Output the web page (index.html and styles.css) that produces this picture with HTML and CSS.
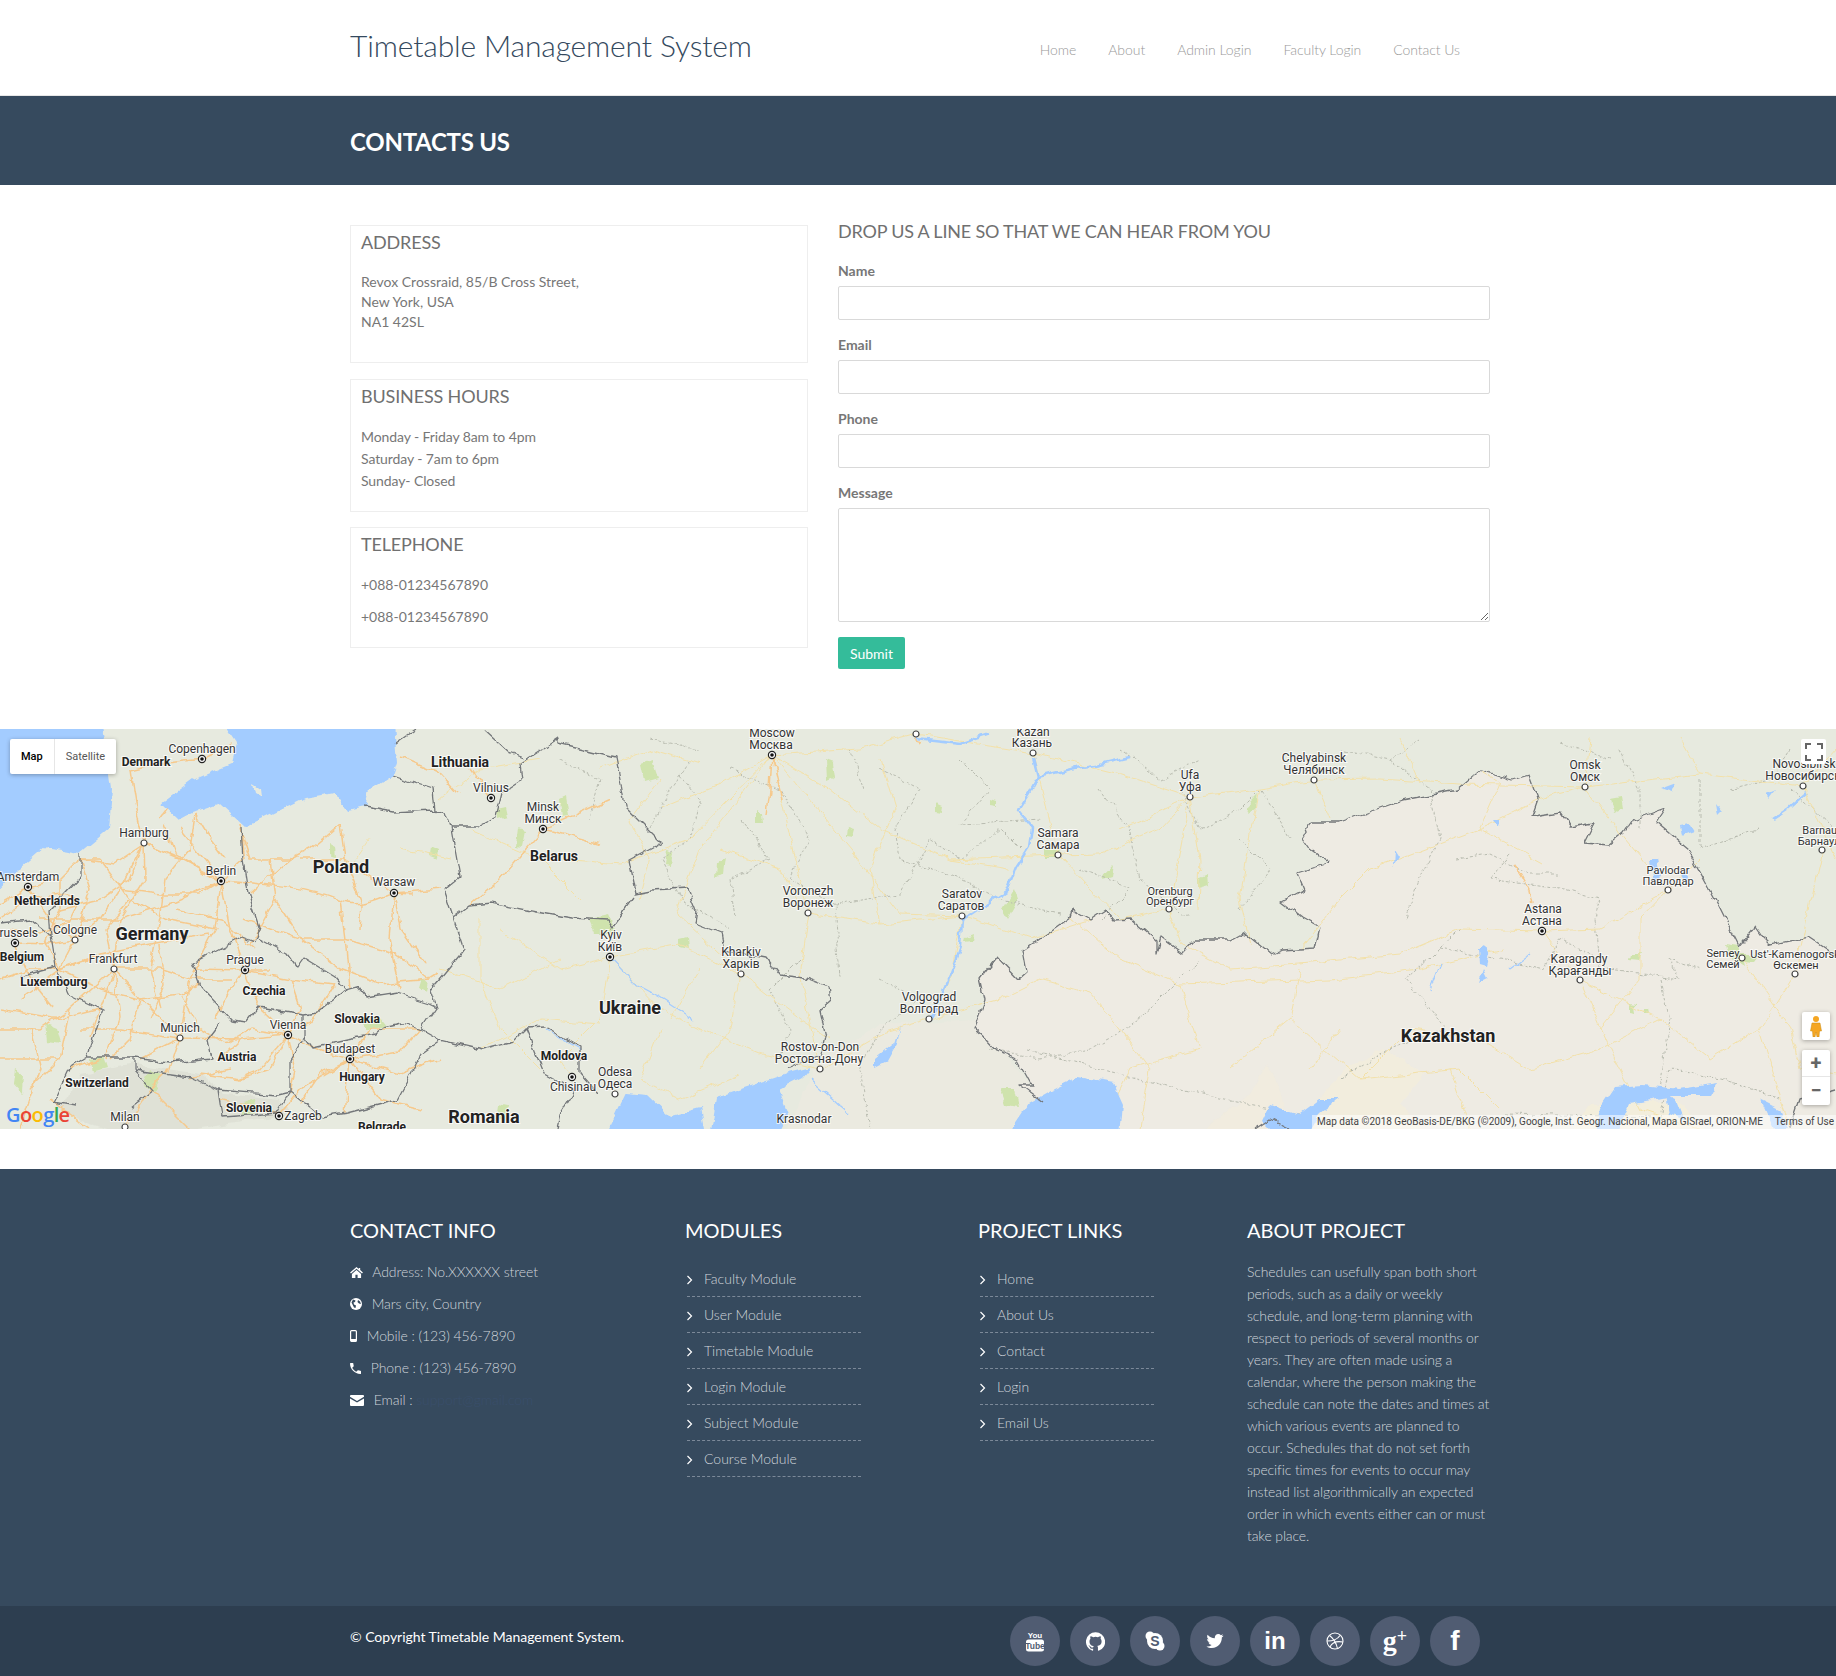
FILE: index.html
```html
<!DOCTYPE html>
<html lang="en">
<head>
    <meta charset="UTF-8">
    <title>Timetable Management System</title>
    <link rel="stylesheet" href="styles.css">
</head>
<body>
    <header class="site-header">
        <div class="container header-row">
            <a class="brand">Timetable Management System</a>
            <nav class="main-nav">
                <a>Home</a>
                <a>About</a>
                <a>Admin Login</a>
                <a>Faculty Login</a>
                <a>Contact Us</a>
            </nav>
        </div>
    </header>

    <section class="banner">
        <div class="container">
            <h1>CONTACTS US</h1>
        </div>
    </section>

    <section class="container contact-row">
        <div class="info-col">
            <div class="info-box">
                <h3>ADDRESS</h3>
                <p class="address">Revox Crossraid, 85/B Cross Street,<br>New York, USA<br>NA1 42SL</p>
            </div>
            <div class="info-box">
                <h3>BUSINESS HOURS</h3>
                <p class="hours">Monday - Friday 8am to 4pm<br>Saturday - 7am to 6pm<br>Sunday- Closed</p>
            </div>
            <div class="info-box">
                <h3>TELEPHONE</h3>
                <p class="tel">+088-01234567890</p>
                <p>+088-01234567890</p>
            </div>
        </div>
        <form class="contact-form">
            <h3>DROP US A LINE SO THAT WE CAN HEAR FROM YOU</h3>
            <label for="name">Name</label>
            <input type="text" id="name">
            <label for="email">Email</label>
            <input type="text" id="email">
            <label for="phone">Phone</label>
            <input type="text" id="phone">
            <label for="message">Message</label>
            <textarea id="message"></textarea>
            <button type="button">Submit</button>
        </form>
    </section>

    <section class="map">
        <svg class="map-art" viewBox="0 0 1836 400" width="1836" height="400">
            <defs>
                <filter id="rough" filterUnits="userSpaceOnUse" x="0" y="0" width="1836" height="400" color-interpolation-filters="sRGB">
                    <feTurbulence type="fractalNoise" baseFrequency="0.07" numOctaves="3" seed="4"/>
                    <feDisplacementMap in="SourceGraphic" scale="8" xChannelSelector="R" yChannelSelector="G"/>
                </filter>
                <g id="capital"><circle r="3.6" fill="#fff" stroke="#222" stroke-width="1.2"/><circle r="1.8" fill="#111"/></g>
                <circle id="town" r="3" fill="#fff" stroke="#444" stroke-width="1.2"/>
            </defs>

            <g filter="url(#rough)">
                <!-- land -->
                <rect x="-20" y="-20" width="1876" height="440" fill="#e7eadf"/>
                <path d="M780 420L815 335 880 295 980 290 1043 373 998 420Z" fill="#ebeae0"/>
                <path class="kz" d="M998 420L1043 373 1020 356 1032 356 1018 331 996 321 987 311 974 299 985 271 980 249 996 228 1018 251 1027 243 1023 221 1038 211 1070 188 1072 181 1090 191 1105 181 1114 191 1130 190 1157 213 1157 224 1161 208 1183 224 1195 211 1230 211 1244 203 1271 226 1282 221 1315 219 1320 198 1302 188 1282 173 1304 161 1297 144 1329 134 1311 121 1302 108 1311 94 1339 94 1403 71 1457 61 1481 41 1512 51 1529 46 1538 71 1532 88 1560 84 1570 98 1594 94 1584 114 1609 116 1625 103 1633 91 1666 79 1656 94 1688 121 1717 174 1739 218 1755 198 1762 208 1770 216 1809 208 1833 224 1860 244 1860 420Z"/>
                <!-- sand and alps -->
                <path d="M1300 420L1315 375 1345 340 1385 320 1425 345 1400 375 1440 420Z" fill="#f5efd8" opacity=".6"/>
                <path d="M1560 420L1590 375 1680 372 1720 420Z" fill="#f5efd8" opacity=".7"/>
                <path d="M1180 420L1250 365 1268 335 1300 420Z" fill="#f4eedb" opacity=".5"/>
                <path d="M134 335L200 345L225 365L280 370L290 385L230 395L130 410L90 395L60 380L80 345Z" fill="#d5d8cd" opacity=".45"/>

                <!-- parks -->
                <g fill="#cfe3ad">
                    <path d="M330 115l5 3 1 10-6-2zM430 118l8 4-1 8-8-3zM497 80l9-2 2 9-10 3zM518 100l7 2-3 15-6-1zM560 70l6-3 3 20-7 1zM590 190l18-4 8 18-20 0zM640 35l12-4 6 18-14 4zM665 120l8 4-2 12-8-1zM680 210l8-2 1 12-9-2zM420 250l8 3-2 10-9-3zM360 290l20-3 8 10-22 4zM15 340l8 6-1 18-9-10zM45 295l12 5 4 14-14-2zM90 330l12-3 4 12-14 4zM150 340l12 8-8 14-10-6zM240 375l14-4 2 12-14 4zM498 375l10 2-2 14-10-2z"/>
                    <path d="M825 30l8 3 2 15-9 4zM756 80l7 4 1 10-8 0zM716 135l9-6-2 16-8 4zM848 98l7 2-2 8-6-1zM935 75l7 3-1 6-6-1zM990 70l6 2 0 6-6-1zM1045 120l16 0-3 8-13 0zM1002 180l12-20 4 12-10 18zM1105 145l9-10-2 14-10 3zM1250 72l8-8-2 14-8 5zM1198 150l10-4 1 10-11 3zM1000 360l14 0 4 18-12-2zM965 208l8-3-1 7-8 1zM1610 70l12-2 2 12-10 4zM1630 225l12 0-3 6-10-1zM1630 274l5 1 1 9-6-1zM1644 280l4 0 1 5-5 0zM1725 215l14 2 5 20-16-10zM1740 225l20 0-6 8-12-1z"/>
                </g>

                <!-- regional borders -->
                <g class="region">
                    <path d="M680 45L700 70L690 110L660 130L680 170M680 170L730 200M730 40L780 60L810 110L790 150L835 175L840 250M835 175L900 165L930 110L960 130L1000 100L1020 120"/>
                    <path d="M880 40L920 60L895 100L900 130L960 150L1000 170L1060 185M1100 60L1130 100L1140 150L1190 190M1180 60L1200 100L1240 80L1260 60L1290 110"/>
                    <path d="M880 250L920 270L880 300L860 340L870 400M990 320L1040 330L1090 320L1120 305L1150 280L1200 230"/>
                    <path d="M1025 320L1100 340L1200 365L1300 385M1510 125L1490 150L1560 160L1600 170L1595 190L1600 250M1460 200L1430 230L1405 250L1445 300L1390 320L1340 350"/>
                    <path d="M1455 130L1490 125L1530 145L1560 145M1440 220L1500 230L1545 240L1560 210L1590 225L1610 240L1680 250L1670 230L1700 240M1660 250L1670 290L1660 360"/>
                    <path d="M1390 30L1430 60L1440 110L1420 150L1405 190M1620 20L1640 60L1640 100M1700 50L1700 120M1760 100L1700 120M1790 60L1836 100"/>
                    <path d="M1505 385L1660 388L1670 340L1720 350L1780 370"/>
                    <path d="M650 100L670 60L690 30M740 90L770 130L730 150L735 190M800 230L770 260L790 300L780 330M865 60L850 20M960 30L990 60L960 95L1040 90M1080 140L1130 160L1100 190M1240 110L1270 140L1240 180"/>
                    <path d="M560 30L600 50L590 90M650 10L700 20M1120 20L1160 50L1200 30M1340 20L1390 30L1420 10M1560 15L1610 30M1730 60L1770 50L1790 20"/>
                </g>

                <!-- thin roads -->
                <g class="road-thin">
                    <path d="M500 200L560 240L610 228L680 215L741 245M610 228L600 290L560 330L572 348M610 228L660 280L700 300L760 325L820 340"/>
                    <path d="M480 320L540 290L600 295M440 240L500 260L560 230M370 110L350 140M400 120L450 130M560 130L620 135L690 110L772 26"/>
                    <path d="M772 26L720 55L660 80M772 26L700 120L676 185L741 245M772 26L808 184L800 240L820 340M772 26L850 120L900 185L962 187"/>
                    <path d="M808 184L880 195L962 187L1030 210L1090 191M962 187L950 250L929 290M741 245L800 290L830 310M820 340L880 305L929 290L1000 270"/>
                    <path d="M772 26L860 20L916 5L1033 24L1120 45L1190 68L1260 60L1314 51L1380 50L1460 55L1585 58L1700 45L1803 57"/>
                    <path d="M1033 24L1058 126L1120 190L1169 180L1190 68M1058 126L1100 125L1160 100L1190 68M1058 126L950 130L880 100L830 60L772 26"/>
                    <path d="M1169 180L1180 215L1230 240L1300 235L1400 225L1460 200L1542 202L1600 200L1668 161L1700 130M1585 58L1625 110L1668 161"/>
                    <path d="M1542 202L1580 251L1610 320L1640 380M1580 251L1660 290L1710 330L1760 300L1795 245L1822 121M1668 161L1640 190L1640 250L1600 300"/>
                    <path d="M1070 188L1120 230L1180 255L1330 250L1420 240L1505 220M1300 240L1290 290L1360 350L1410 300L1480 310L1530 340L1600 320L1660 290"/>
                    <path d="M1180 255L1200 320L1130 340L1100 400M1290 290L1230 340M1742 229L1790 300L1800 340L1836 345M1360 350L1460 340L1500 380"/>
                    <path d="M1542 134L1480 100L1400 130L1370 140L1340 170L1300 220M1480 100L1500 55L1480 41M1585 58L1540 70L1480 100"/>
                    <path d="M1000 270L1040 250L1090 265L1120 300L1150 340L1140 400"/>
                    <path d="M660 50L630 90L650 130L640 170M470 100L540 130L580 170M440 70L480 40L540 30M600 40L650 20L700 35M480 190L480 250L500 300L540 340M660 300L640 350L680 370L740 345M700 240L670 290M740 245L730 300L700 340"/>
                    <path d="M720 120L780 140L808 184M880 30L895 80L870 140L880 195M950 130L1010 140M1120 100L1190 68M1190 68L1200 130L1198 180M1260 60L1250 110L1240 170L1250 215M1314 51L1330 90"/>
                    <path d="M1400 10L1420 55M1585 58L1590 10M1680 10L1700 45M1836 20L1803 57M1803 57L1836 130M1340 300L1310 340M1450 340L1470 400M1640 380L1700 400M1760 300L1790 400"/>
                </g>

                <!-- motorways and main roads, west -->
                <g class="road-main">
                    <path d="M221 152C270 155 310 158 340 172C362 180 380 168 394 164L412 165"/>
                    <path d="M144 114L180 130L221 152M144 114L135 75L130 42L160 35L202 30L232 15"/>
                    <path d="M144 114L120 160L100 190L75 211L60 240L20 270"/>
                    <path d="M144 114L145 150L120 190L114 240L120 290L105 330"/>
                    <path d="M221 152L215 200L190 250L180 309L140 330"/>
                    <path d="M114 240L150 280L180 309L240 310L288 306L320 322L350 330L400 322L420 300"/>
                    <path d="M221 152L230 200L245 241L270 241M245 241L260 280L288 306"/>
                    <path d="M245 190L270 200L300 210L340 240L380 255L430 250L438 245"/>
                    <path d="M340 95L345 130L362 175L360 200M394 164L400 200L425 235"/>
                    <path d="M350 330L345 385M350 330L380 370L420 380M350 330L300 360L280 385"/>
                    <path d="M400 28L440 45L458 65M491 69L470 40M610 70L543 100L500 150L470 175M543 100L600 115"/>
                    <path d="M28 158L60 150L80 130L100 130M28 158L50 190L75 211M15 214L50 215L75 211M15 214L30 250L54 280"/>
                    <path d="M75 211L90 160L80 130M0 175L28 158M60 180L100 170L130 150L144 114"/>
                    <path d="M180 100L200 125L221 152M195 85L190 120L165 150L160 190L150 240L160 280M240 95L245 130L221 152"/>
                    <path d="M114 240L70 280L60 330L30 360M114 240L160 240L190 250L230 250M114 240L105 200L130 170"/>
                    <path d="M60 240L100 225L150 215L210 205M80 300L120 300L180 309M125 398L150 360L170 340L180 309"/>
                    <path d="M160 90L175 70M175 180L220 190L255 220M0 300L40 300L70 280M0 330L30 330L60 330"/>
                    <path d="M220 330L240 310M237 350L260 340L288 306M190 350L230 340M220 370L280 385"/>
                    <path d="M60 150L60 180L45 215L60 240M80 130L115 135L145 115M100 130L130 170L165 190L215 200M40 190L80 190L120 190L170 175L221 152M120 160L160 165L200 165L221 152"/>
                    <path d="M165 95L175 125L205 145M195 85L210 110L225 130M240 100L250 130L290 130L310 120L340 95M60 240L100 260L140 270L180 265L200 255M115 240L100 280L90 310M140 270L130 310L110 330"/>
                    <path d="M180 265L200 300L225 315M160 215L165 255L150 290M195 240L245 241L290 250L335 255M245 241L225 270L215 290M290 250L300 280L288 306M335 255L320 280L304 300"/>
                    <path d="M225 315L250 300L288 306M288 306L270 340L240 350L200 345M288 306L295 340L290 365M350 330L320 345L300 375M350 330L370 300L420 300M350 330L400 345L440 330"/>
                    <path d="M270 130L275 170L300 210M300 210L345 210L395 225L430 250M340 172L345 210L350 260M394 164L390 210L400 260M300 130L345 130L394 164L440 160M290 130L250 165M275 170L250 215"/>
                    <path d="M0 190L30 170L60 165L80 170M10 200L40 205L70 190L80 170M30 240L60 240L90 230M0 250L30 240M0 280L60 290L100 280M30 300L40 340L20 400M70 340L100 330M50 370L90 400M150 360L190 400"/>
                    <path d="M772 26L770 60L767 85M772 26L782 70"/>
                    <path d="M916 5L916 12L922 14"/>
                    <path d="M1512 134L1520 145L1529 161L1532 174" stroke="#f2cf86"/>
                </g>

                <!-- water -->
                <g fill="#a3ccff">
                    <path d="M-20 -20L100 -20L108 30L112 60L109 100L80 124L45 118L22 138L-20 181Z"/>
                    <path d="M214 -20L393 -20L397 34L393 46L370 61L366 79L348 83L335 64L304 69L245 98L219 74L192 84L179 91L161 74L192 51L232 34L237 14Z"/>
                    <path d="M116 45l14 6-3 18-12-6zM150 68l12 4-4 14-10-6z" fill="#e7eadf"/>
                    <path d="M252 55l8 5 1 8-7-4z" fill="#e7eadf"/>
                    <path d="M598 420L625 364L647 366L670 388L700 380L708 420Z"/>
                    <path d="M708 420L717 368L753 356L788 344L811 338L802 349L779 361L788 384L770 420Z"/>
                    <path d="M998 420L1029 374L1052 361L1079 348L1114 354L1123 374L1119 420Z"/>
                    <path d="M1591 420L1600 380L1615 358L1642 356L1680 360L1717 354L1710 367L1672 367L1630 375L1610 420Z"/>
                    <path d="M1290 420L1262 392L1270 375L1300 385L1320 370L1340 370L1320 385L1300 420Z"/>
                    <path d="M875 330l20-16 6-18-4 18-10 18-12 6z"/>
                    <path d="M1665 365l12 6 8 20-16-6zM1760 370l20 10 8 20-14 0z"/>
                    <path d="M1478 220l6-4 5 8-3 12-7-2zM1680 95l10-2 6 10-14 5zM1495 90l6 0-2 6zM1660 60l16-6-4 10zM1650 130l8 0 3 15-7 10zM1765 65l10-4-6 8zM1715 75l6 8-4 4z"/>
                    <path d="M1683 142l6 8-3 6-5-6zM1395 120l5 8-6 10zM1483 240l4 8-8 4z"/>
                </g>
                <g class="river">
                    <path d="M1033 28L1038 48L1029 64L1018 81L1032 98L1029 118L1016 138L1007 161L989 173L962 191L960 218L949 248L936 278L929 290M1038 48L1070 40L1100 35L1130 28M916 10L960 15L990 5"/>
                    <path d="M1806 64L1790 78L1772 90"/>
                </g>
                <path class="river-thin" d="M610 228L634 254L660 268L695 291M1440 235L1430 260M545 300L580 320M1530 225L1510 240M810 350L850 385"/>

                <!-- country borders -->
                <g class="border">
                    <path d="M241 98L243 131L248 164L259 198L254 213M257 208L286 224L297 239L304 229L335 248L346 261L357 258L366 269L397 264L429 274L437 278L431 261L464 221L453 188L444 161L460 148L451 98L446 84L433 81L393 83L364 78"/>
                    <path d="M451 98L478 98L496 88L502 64L522 51L520 34L558 9L558 14L616 28L621 54L625 78L661 114L629 131L636 164L652 161L688 159L697 181L695 194L721 204L724 221L766 229L779 246L806 249L829 258L831 271L820 281L826 308L822 325L786 341"/>
                    <path d="M395 14L415 0M484 1L509 24L522 29M393 46L433 59L435 81"/>
                    <path d="M453 188L469 176L491 174L536 183L571 189L607 191L612 198L634 168"/>
                    <path d="M437 278L422 301L440 311L482 321L513 313L527 299L545 298L580 318L580 344L598 364M527 299L545 344L576 361L562 384L558 400"/>
                    <path d="M422 301L402 294L384 298L375 306L348 311L312 319L304 308L304 286L317 284L346 261M304 286L259 279L248 293L232 291L201 258L192 234L241 208L254 213"/>
                    <path d="M221 294L208 311L212 329L170 333L134 328L87 328L103 281L67 264L56 238L51 208L49 181L80 148L80 124M87 328L71 338L54 374L76 378M134 328L134 341L152 361L130 378"/>
                    <path d="M134 341L192 349L219 361L277 366L290 363L290 331L304 308M219 361L223 388L277 384L290 363L321 388L348 384L397 371L422 324L440 311M0 194L31 191L51 208M18 248L56 238"/>
                    <path d="M1043 373L1020 356 1032 356 1018 331 996 321 987 311 974 299 985 271 980 249 996 228 1018 251 1027 243 1023 221 1038 211 1070 188 1072 181 1090 191 1105 181 1114 191 1130 190 1157 213 1157 224 1161 208 1183 224 1195 211 1230 211 1244 203 1271 226 1282 221 1315 219 1320 198 1302 188 1282 173 1304 161 1297 144 1329 134 1311 121 1302 108 1311 94 1339 94 1403 71 1457 61 1481 41 1512 51 1529 46 1538 71 1532 88 1560 84 1570 98 1594 94 1584 114 1609 116 1625 103 1633 91 1666 79 1656 94 1688 121 1717 174 1739 218 1755 198 1762 208 1770 216 1809 208 1833 224 1860 244"/>
                    <path d="M1790 400L1800 370L1836 360M1255 400L1270 390L1290 400"/>
                </g>
            </g>

            <!-- pins -->
            <use href="#capital" x="202" y="30"/><use href="#capital" x="491" y="69"/><use href="#capital" x="543" y="100"/>
            <use href="#capital" x="221" y="152"/><use href="#capital" x="394" y="164"/><use href="#capital" x="28" y="158"/>
            <use href="#capital" x="15" y="214"/><use href="#capital" x="245" y="241"/><use href="#capital" x="610" y="228"/>
            <use href="#capital" x="288" y="306"/><use href="#capital" x="350" y="330"/><use href="#capital" x="572" y="348"/>
            <use href="#capital" x="279" y="387"/><use href="#capital" x="772" y="26"/><use href="#capital" x="1542" y="202"/>
            <use href="#town" x="144" y="114"/><use href="#town" x="75" y="211"/><use href="#town" x="114" y="240"/>
            <use href="#town" x="180" y="309"/><use href="#town" x="615" y="365"/><use href="#town" x="125" y="398"/>
            <use href="#town" x="916" y="5"/><use href="#town" x="1033" y="24"/><use href="#town" x="1314" y="51"/>
            <use href="#town" x="1190" y="68"/><use href="#town" x="1058" y="126"/><use href="#town" x="808" y="184"/>
            <use href="#town" x="962" y="187"/><use href="#town" x="1169" y="180"/><use href="#town" x="741" y="245"/>
            <use href="#town" x="929" y="290"/><use href="#town" x="820" y="340"/><use href="#town" x="1585" y="58"/>
            <use href="#town" x="1803" y="57"/><use href="#town" x="1822" y="121"/><use href="#town" x="1668" y="161"/>
            <use href="#town" x="1580" y="251"/><use href="#town" x="1742" y="229"/><use href="#town" x="1795" y="245"/>

            <!-- labels -->
            <g class="city">
                <text x="202" y="24">Copenhagen</text>
                <text x="491" y="63">Vilnius</text>
                <text x="543" y="82">Minsk</text><text x="543" y="94">Минск</text>
                <text x="144" y="108">Hamburg</text>
                <text x="221" y="146">Berlin</text>
                <text x="394" y="157">Warsaw</text>
                <text x="28" y="152">Amsterdam</text>
                <text x="15" y="208">Brussels</text>
                <text x="75" y="205">Cologne</text>
                <text x="113" y="234">Frankfurt</text>
                <text x="245" y="235">Prague</text>
                <text x="611" y="210">Kyiv</text><text x="610" y="222">Київ</text>
                <text x="288" y="300">Vienna</text>
                <text x="180" y="303">Munich</text>
                <text x="350" y="324">Budapest</text>
                <text x="615" y="347">Odesa</text><text x="615" y="359">Одеса</text>
                <text x="573" y="362">Chisinau</text>
                <text x="303" y="391">Zagreb</text>
                <text x="125" y="392">Milan</text>
                <text x="772" y="8">Moscow</text><text x="771" y="20">Москва</text>
                <text x="1033" y="7">Kazan</text><text x="1032" y="18">Казань</text>
                <text x="1314" y="33">Chelyabinsk</text><text x="1314" y="45">Челябинск</text>
                <text x="1190" y="50">Ufa</text><text x="1190" y="62">Уфа</text>
                <text x="1058" y="108">Samara</text><text x="1058" y="120">Самара</text>
                <text x="808" y="166">Voronezh</text><text x="808" y="178">Воронеж</text>
                <text x="962" y="169">Saratov</text><text x="961" y="181">Саратов</text>
                <text x="804" y="394">Krasnodar</text>
                <text x="1585" y="40">Omsk</text><text x="1585" y="52">Омск</text>
                <text x="1804" y="39">Novosibirsk</text><text x="1803" y="51">Новосибирск</text>
                <text x="741" y="227">Kharkiv</text><text x="741" y="239">Харків</text>
                <text x="929" y="272">Volgograd</text><text x="929" y="284">Волгоград</text>
                <text x="820" y="322">Rostov-on-Don</text><text x="819" y="334">Ростов-на-Дону</text>
                <text x="1543" y="184">Astana</text><text x="1542" y="196">Астана</text>
                <text x="1579" y="234">Karagandy</text><text x="1580" y="246">Қарағанды</text>
            </g>
            <g class="city small">
                <text x="1170" y="166">Orenburg</text><text x="1170" y="176">Оренбург</text>
                <text x="1821" y="105">Barnaul</text><text x="1819" y="116">Барнаул</text>
                <text x="1668" y="145">Pavlodar</text><text x="1668" y="156">Павлодар</text>
                <text x="1723" y="228">Semey</text><text x="1723" y="239">Семей</text>
                <text x="1795" y="229">Ust'-Kamenogorsk</text><text x="1796" y="240">Өскемен</text>
            </g>
            <g class="state">
                <text x="146" y="37">Denmark</text>
                <text x="47" y="176">Netherlands</text>
                <text x="22" y="232">Belgium</text>
                <text x="54" y="257">Luxembourg</text>
                <text x="264" y="266">Czechia</text>
                <text x="357" y="294">Slovakia</text>
                <text x="237" y="332">Austria</text>
                <text x="362" y="352">Hungary</text>
                <text x="564" y="331">Moldova</text>
                <text x="97" y="358">Switzerland</text>
                <text x="249" y="383">Slovenia</text>
                <text x="382" y="402">Belgrade</text>
            </g>
            <g class="state large">
                <text x="460" y="38">Lithuania</text>
                <text x="554" y="132">Belarus</text>
            </g>
            <g class="country">
                <text x="341" y="144">Poland</text>
                <text x="152" y="211">Germany</text>
                <text x="630" y="285">Ukraine</text>
                <text x="484" y="394">Romania</text>
                <text x="1448" y="313">Kazakhstan</text>
            </g>
        </svg>

        <div class="map-type">
            <span class="active">Map</span>
            <span>Satellite</span>
        </div>
        <div class="map-btn fullscreen">
            <svg viewBox="0 0 18 18" width="18" height="18"><path d="M1 6V1h5M12 1h5v5M17 12v5h-5M6 17H1v-5" fill="none" stroke="#666" stroke-width="2"/></svg>
        </div>
        <div class="map-btn pegman">
            <svg viewBox="0 0 14 22" width="14" height="22"><circle cx="7" cy="4" r="3" fill="#f5a623"/><path d="M3 8h8l1.500 8h-2l-.5 6H8l-1-5-1 5H4l-.5-6h-2z" fill="#f5a623" stroke="#c98a12" stroke-width=".5"/></svg>
        </div>
        <div class="map-zoom">
            <button type="button">+</button>
            <button type="button">&minus;</button>
        </div>
        <div class="google-logo"><span class="g-b">G</span><span class="g-r">o</span><span class="g-y">o</span><span class="g-b">g</span><span class="g-g">l</span><span class="g-r">e</span></div>
        <div class="map-credit">
            <span>Map data ©2018 GeoBasis-DE/BKG (©2009), Google, Inst. Geogr. Nacional, Mapa GISrael, ORION-ME</span>
            <span>Terms of Use</span>
        </div>
    </section>

    <footer class="site-footer">
        <div class="container footer-grid">
            <div>
                <h4>CONTACT INFO</h4>
                <ul class="contact-list">
                    <li>
                        <svg class="ic" viewBox="0 0 14 12" width="13" height="11"><path d="M7 0L0 6l1 1 6-5 6 5 1-1-3-2.600V1H9.500v1.300zM2 7.500V12h3.800V8.500h2.400V12H12V7.500L7 3.200z" fill="#fff"/></svg>
                        Address: No.XXXXXX street
                    </li>
                    <li>
                        <svg class="ic" viewBox="0 0 12 12" width="12" height="12"><circle cx="6" cy="6" r="6" fill="#fff"/><path d="M3 1.500L5.500 2.500 5 4 3.500 4.500 4 6.500 6 7.500 5.500 10 4 9.500 2.500 6.500 1.500 4.500zM8 2l2 1.500L11 6 9 5.500 7.500 4z" fill="#364a5e"/></svg>
                        Mars city, Country
                    </li>
                    <li>
                        <svg class="ic" viewBox="0 0 7 12" width="7" height="12"><rect x=".6" y=".6" width="5.800" height="10.800" rx="1" fill="none" stroke="#fff" stroke-width="1.200"/><rect x="1" y="9" width="5" height="2.500" fill="#fff"/></svg>
                        Mobile : (123) 456-7890
                    </li>
                    <li>
                        <svg class="ic" viewBox="3 3 18 18" width="11" height="11"><path d="M6.620 10.790c1.440 2.830 3.760 5.140 6.590 6.590l2.200-2.200c.27-.27.67-.36 1.020-.24 1.120.37 2.330.57 3.570.57.55 0 1 .45 1 1V20c0 .55-.45 1-1 1-9.390 0-17-7.610-17-17 0-.55.45-1 1-1h3.500c.55 0 1 .45 1 1 0 1.250.2 2.450.57 3.570.11.35.03.74-.25 1.020l-2.200 2.200z" fill="#fff"/></svg>
                        Phone : (123) 456-7890
                    </li>
                    <li>
                        <svg class="ic" viewBox="0 0 14 11" width="14" height="11"><path d="M0 1a1 1 0 0 1 1-1h12a1 1 0 0 1 1 1v.8L7 6 0 1.800zM0 3.400L7 7.600 14 3.400V10a1 1 0 0 1-1 1H1a1 1 0 0 1-1-1z" fill="#fff"/></svg>
                        Email : <a class="mail">support@gmail.com</a>
                    </li>
                </ul>
            </div>
            <div>
                <h4>MODULES</h4>
                <ul class="link-list">
                    <li><svg class="chev" viewBox="0 0 6 10" width="6" height="10"><path d="M.5 1l4 4-4 4" fill="none" stroke="#fff" stroke-width="1.200"/></svg>Faculty Module</li>
                    <li><svg class="chev" viewBox="0 0 6 10" width="6" height="10"><path d="M.5 1l4 4-4 4" fill="none" stroke="#fff" stroke-width="1.200"/></svg>User Module</li>
                    <li><svg class="chev" viewBox="0 0 6 10" width="6" height="10"><path d="M.5 1l4 4-4 4" fill="none" stroke="#fff" stroke-width="1.200"/></svg>Timetable Module</li>
                    <li><svg class="chev" viewBox="0 0 6 10" width="6" height="10"><path d="M.5 1l4 4-4 4" fill="none" stroke="#fff" stroke-width="1.200"/></svg>Login Module</li>
                    <li><svg class="chev" viewBox="0 0 6 10" width="6" height="10"><path d="M.5 1l4 4-4 4" fill="none" stroke="#fff" stroke-width="1.200"/></svg>Subject Module</li>
                    <li><svg class="chev" viewBox="0 0 6 10" width="6" height="10"><path d="M.5 1l4 4-4 4" fill="none" stroke="#fff" stroke-width="1.200"/></svg>Course Module</li>
                </ul>
            </div>
            <div>
                <h4>PROJECT LINKS</h4>
                <ul class="link-list">
                    <li><svg class="chev" viewBox="0 0 6 10" width="6" height="10"><path d="M.5 1l4 4-4 4" fill="none" stroke="#fff" stroke-width="1.200"/></svg>Home</li>
                    <li><svg class="chev" viewBox="0 0 6 10" width="6" height="10"><path d="M.5 1l4 4-4 4" fill="none" stroke="#fff" stroke-width="1.200"/></svg>About Us</li>
                    <li><svg class="chev" viewBox="0 0 6 10" width="6" height="10"><path d="M.5 1l4 4-4 4" fill="none" stroke="#fff" stroke-width="1.200"/></svg>Contact</li>
                    <li><svg class="chev" viewBox="0 0 6 10" width="6" height="10"><path d="M.5 1l4 4-4 4" fill="none" stroke="#fff" stroke-width="1.200"/></svg>Login</li>
                    <li><svg class="chev" viewBox="0 0 6 10" width="6" height="10"><path d="M.5 1l4 4-4 4" fill="none" stroke="#fff" stroke-width="1.200"/></svg>Email Us</li>
                </ul>
            </div>
            <div>
                <h4>ABOUT PROJECT</h4>
                <p class="about">Schedules can usefully span both short periods, such as a daily or weekly schedule, and long-term planning with respect to periods of several months or years. They are often made using a calendar, where the person making the schedule can note the dates and times at which various events are planned to occur. Schedules that do not set forth specific times for events to occur may instead list algorithmically an expected order in which events either can or must take place.</p>
            </div>
        </div>
    </footer>

    <div class="copy-bar">
        <div class="container copy-row">
            <p>© Copyright Timetable Management System.</p>
            <div class="social">
                <a>
                    <svg viewBox="0 0 18 22" width="18" height="22"><text x="9" y="8" class="yt-you">You</text><rect x="0" y="9.500" width="18" height="12" rx="2.500" fill="#fff"/><text x="9" y="19" class="yt-tube">Tube</text></svg>
                </a>
                <a>
                    <svg viewBox="0 0 24 24" width="19" height="19"><path d="M12 .3a12 12 0 0 0-3.800 23.400c.6.1.8-.3.8-.6v-2c-3.300.7-4-1.600-4-1.600-.5-1.400-1.300-1.800-1.300-1.800-1.100-.7.1-.7.1-.7 1.200.1 1.800 1.200 1.800 1.200 1 1.800 2.800 1.300 3.500 1 .1-.8.4-1.300.8-1.600-2.700-.3-5.500-1.300-5.500-6 0-1.200.5-2.300 1.300-3.100-.2-.4-.6-1.600 0-3.200 0 0 1-.3 3.400 1.200a11.500 11.500 0 0 1 6 0c2.300-1.500 3.300-1.200 3.300-1.200.6 1.600.2 2.800 0 3.200.9.8 1.300 1.900 1.300 3.200 0 4.600-2.800 5.600-5.500 5.900.5.4.9 1 .9 2.200v3.300c0 .3.1.7.8.6A12 12 0 0 0 12 .3" fill="#fff"/></svg>
                </a>
                <a>
                    <svg viewBox="0 0 20 20" width="20" height="20"><circle cx="10" cy="10" r="8" fill="#fff"/><circle cx="5" cy="5" r="4.500" fill="#fff"/><circle cx="15" cy="15" r="4.500" fill="#fff"/><text x="10" y="15" class="sk-s">S</text></svg>
                </a>
                <a>
                    <svg viewBox="1 3 22 19" width="18" height="16"><path d="M22.460 6c-.77.35-1.600.58-2.460.69.88-.53 1.560-1.370 1.880-2.380-.83.5-1.750.85-2.720 1.050C18.370 4.500 17.260 4 16 4c-2.350 0-4.270 1.920-4.270 4.290 0 .34.04.67.11.98C8.280 9.090 5.110 7.380 3 4.790c-.37.63-.58 1.370-.58 2.150 0 1.490.75 2.810 1.910 3.560-.71 0-1.370-.2-1.950-.5v.03c0 2.080 1.480 3.820 3.440 4.210a4.220 4.220 0 0 1-1.930.07 4.280 4.280 0 0 0 4 2.980 8.521 8.521 0 0 1-5.330 1.840c-.34 0-.68-.02-1.020-.06C3.440 20.290 5.700 21 8.120 21 16 21 20.330 14.460 20.330 8.790c0-.19 0-.37-.01-.56.84-.6 1.560-1.360 2.140-2.230z" fill="#fff"/></svg>
                </a>
                <a><span class="soc-txt in">in</span></a>
                <a>
                    <svg viewBox="0 0 18 18" width="18" height="18"><g fill="none" stroke="#fff" stroke-width="1.100"><circle cx="9" cy="9" r="8"/><path d="M3.500 3.500C7 6 10 10 11.500 16.500M1.200 9C6 9 11 8 14 3.500M4 15C6 10.500 11 9 16.800 10"/></g></svg>
                </a>
                <a><span class="soc-txt gp">g<sup>+</sup></span></a>
                <a><span class="soc-txt fb">f</span></a>
            </div>
        </div>
    </div>
</body>
</html>
```

FILE: styles.css
```css
* {
    box-sizing: border-box;
}
body {
    font-family: Lato, sans-serif;
    font-size: 14px;
    color: #777;
    background: #fff;
    margin: 0;
}
h1, h3, h4, p, ul {
    margin: 0;
    padding: 0;
}
ul {
    list-style: none;
}
.container {
    width: 1140px;
    margin-left: 350px;
}

/* header */
.site-header {
    height: 96px;
    border-bottom: 1px solid #e7e7e7;
}
.header-row {
    display: flex;
    justify-content: space-between;
    height: 95px;
}
.brand {
    font-size: 30px;
    font-weight: 300;
    letter-spacing: -0.15px;
    color: #34495e;
    line-height: 90px;
}
.main-nav {
    display: flex;
    gap: 32px;
    padding: 40px 30px 0 0;
}
.main-nav a {
    font-weight: 300;
    letter-spacing: -0.05px;
    color: #999;
    line-height: 20px;
}

.banner {
    background: #364a5e;
    height: 89px;
}
.banner h1 {
    color: #fff;
    font-size: 24px;
    font-weight: 700;
    letter-spacing: -0.25px;
    line-height: 92px;
}

/* contact */
.contact-row {
    display: flex;
    gap: 30px;
    height: 544px;
    padding-top: 36px;
}
.info-col {
    width: 458px;
    padding-top: 4px;
}
.info-box {
    border: 1px solid #eee;
    padding: 5px 10px 19px;
    margin-bottom: 15.5px;
}
.info-box:last-child {
    margin-bottom: 0;
}
.info-box h3 {
    font-size: 18px;
    font-weight: 400;
    letter-spacing: -0.15px;
    line-height: 22px;
    color: #707070;
    margin-bottom: 19px;
}
.info-box p {
    line-height: 22px;
}
.info-box .address {
    line-height: 20px;
    padding-bottom: 11px;
}
.info-box .hours {
    letter-spacing: -0.1px;
}
.info-box .tel {
    margin-bottom: 10px;
}
.contact-form {
    width: 652px;
}
.contact-form h3 {
    font-size: 18px;
    font-weight: 400;
    letter-spacing: -0.2px;
    line-height: 20px;
    color: #707070;
    margin-bottom: 20px;
}
.contact-form label {
    display: block;
    font-weight: 700;
    line-height: 20px;
    margin-bottom: 5px;
}
.contact-form input, .contact-form textarea {
    display: block;
    width: 100%;
    height: 34px;
    border: 1px solid #d9d9d9;
    border-radius: 2px;
    margin-bottom: 15px;
}
.contact-form textarea {
    height: 114px;
}
.contact-form button {
    display: block;
    width: 67px;
    height: 32px;
    background: #34bc9a;
    color: #fff;
    border: none;
    border-radius: 2px;
    font-family: Lato, sans-serif;
    font-size: 14px;
}

/* map */
.map {
    position: relative;
    height: 400px;
    overflow: hidden;
    margin-bottom: 40px;
    background: #e7eadf;
}
.map-art {
    display: block;
}
.kz {
    fill: #eeebe3;
}
.road-main path {
    fill: none;
    stroke: #f6c98c;
    stroke-width: 1.5;
}
.road-thin path {
    fill: none;
    stroke: #f3e1a9;
    stroke-width: 1;
}
.region path {
    fill: none;
    stroke: #b9bcb0;
    stroke-width: 1;
    stroke-dasharray: 3 2;
}
.river path {
    fill: none;
    stroke: #a3ccff;
    stroke-width: 2.5;
}
.river-thin {
    fill: none;
    stroke: #a3ccff;
    stroke-width: 1.2;
}
.border path {
    fill: none;
    stroke: #74777a;
    stroke-width: 1.3;
    stroke-linejoin: round;
}
.city text, .state text, .country text {
    font-family: Roboto, sans-serif;
    text-anchor: middle;
    paint-order: stroke;
    stroke: rgba(255, 255, 255, 0.75);
    stroke-width: 2px;
}
.city text {
    font-size: 12px;
    fill: #333;
}
.city.small text {
    font-size: 11px;
}
.state text {
    font-size: 12px;
    font-weight: 700;
    fill: #222;
}
.state.large text {
    font-size: 14px;
}
.country text {
    font-size: 18px;
    font-weight: 700;
    fill: #222;
}
.map-type {
    position: absolute;
    left: 10px;
    top: 10px;
    display: flex;
    height: 35px;
    background: #fff;
    border-radius: 2px;
    box-shadow: 0 1px 4px rgba(0, 0, 0, 0.3);
    font-family: Roboto, sans-serif;
    font-size: 11px;
    color: #565656;
    line-height: 35px;
}
.map-type span {
    padding: 0 11px;
}
.map-type .active {
    color: #000;
    font-weight: 500;
    border-right: 1px solid #e6e6e6;
}
.map-btn {
    position: absolute;
    display: flex;
    align-items: center;
    justify-content: center;
    background: #fff;
    border-radius: 2px;
}
.fullscreen {
    left: 1801px;
    top: 10px;
    width: 25px;
    height: 25px;
}
.pegman {
    left: 1802px;
    top: 283px;
    width: 28px;
    height: 28px;
    box-shadow: 0 1px 4px rgba(0, 0, 0, 0.3);
}
.map-zoom {
    position: absolute;
    left: 1802px;
    top: 321px;
    width: 28px;
    height: 55px;
    background: #fff;
    border-radius: 2px;
    box-shadow: 0 1px 4px rgba(0, 0, 0, 0.3);
}
.map-zoom button {
    display: block;
    width: 28px;
    height: 27px;
    padding: 0;
    background: none;
    border: none;
    font-family: Roboto, sans-serif;
    font-size: 20px;
    font-weight: 700;
    line-height: 27px;
    color: #666;
}
.map-zoom button:first-child {
    border-bottom: 1px solid #e6e6e6;
}
.google-logo {
    position: absolute;
    left: 6px;
    bottom: 1px;
    font-family: "Open Sans", sans-serif;
    font-size: 20px;
    font-weight: 600;
    letter-spacing: -0.6px;
    line-height: 26px;
}
.g-b { color: #4285f4; }
.g-r { color: #ea4335; }
.g-y { color: #fbbc05; }
.g-g { color: #34a853; }
.map-credit {
    position: absolute;
    right: 0;
    bottom: 0;
    width: 524px;
    height: 14px;
    display: flex;
    justify-content: space-between;
    padding: 0 2px 0 5px;
    background: rgba(255, 255, 255, 0.55);
    font-family: Roboto, sans-serif;
    font-size: 10px;
    line-height: 14px;
    color: #444;
}

/* footer */
.site-footer {
    background: #364a5e;
    height: 437px;
    padding-top: 50px;
    font-weight: 300;
    color: #d0d5db;
}
.footer-grid {
    display: grid;
    grid-template-columns: 335px 293px 269px 243px;
}
.site-footer h4 {
    font-size: 20px;
    font-weight: 400;
    line-height: 22px;
    color: #fff;
    margin-bottom: 20px;
}
.contact-list li {
    line-height: 22px;
    margin-bottom: 10px;
    letter-spacing: -0.08px;
}
.ic {
    margin-right: 6px;
    vertical-align: -1px;
}
.mail {
    color: #3a4f6c;
}
.link-list {
    width: 174px;
    margin-left: 2px;
}
.link-list li {
    line-height: 22px;
    padding: 7px 0 6px;
    border-bottom: 1px dashed #7c8999;
}
.chev {
    margin-right: 11px;
    vertical-align: -1px;
}
.about {
    line-height: 22px;
    letter-spacing: -0.12px;
}
.copy-bar {
    background: #2d3e50;
    height: 70px;
    color: #fff;
}
.copy-row {
    display: flex;
    justify-content: space-between;
    padding-top: 10px;
}
.copy-row p {
    line-height: 42px;
    letter-spacing: -0.03px;
}
.social {
    display: flex;
    gap: 10px;
    margin-right: 10px;
}
.social a {
    display: flex;
    align-items: center;
    justify-content: center;
    width: 50px;
    height: 50px;
    border-radius: 50%;
    background: #505c72;
}
.soc-txt {
    font-family: "Liberation Sans", sans-serif;
    font-weight: 700;
    color: #fff;
    line-height: 1;
}
.in {
    font-size: 24px;
}
.fb {
    font-size: 28px;
}
.gp {
    font-family: "Liberation Serif", serif;
    font-size: 28px;
    font-weight: 700;
}
.gp sup {
    font-size: 18px;
    vertical-align: 8px;
    line-height: 0;
}
.yt-you, .yt-tube {
    font-family: "Liberation Sans", sans-serif;
    font-size: 8px;
    font-weight: 700;
    text-anchor: middle;
    fill: #fff;
}
.yt-tube {
    font-size: 8.500px;
    fill: #505c72;
}
.sk-s {
    font-family: "Liberation Sans", sans-serif;
    font-size: 14px;
    font-weight: 700;
    text-anchor: middle;
    fill: #505c72;
}
```
